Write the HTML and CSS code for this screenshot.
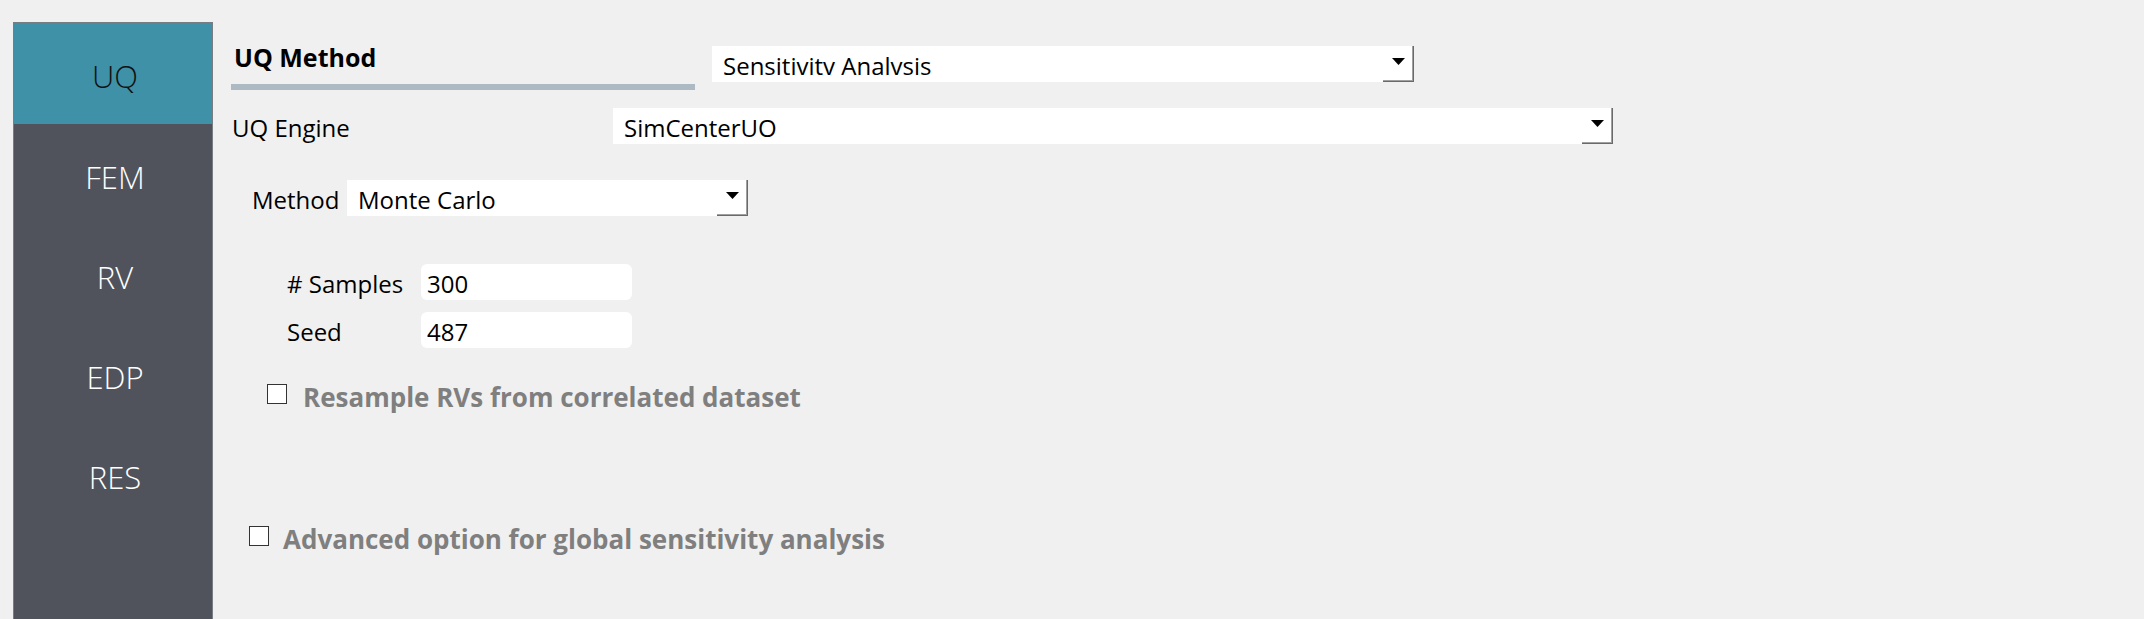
FILE: index.html
```html
<!DOCTYPE html>
<html lang="en">
<head>
<meta charset="utf-8">
<title>UQ</title>
<link rel="stylesheet" href="styles.css">
</head>
<body>
<div class="app">
  <nav class="sidebar">
    <div class="tab tab-active">UQ</div>
    <div class="tab">FEM</div>
    <div class="tab">RV</div>
    <div class="tab">EDP</div>
    <div class="tab">RES</div>
  </nav>
  <main class="main">
    <div class="header-row">
      <div class="header">
        <div class="header-title">UQ Method</div>
        <div class="header-bar"></div>
      </div>
      <div class="combo combo-method-type">
        <span class="combo-text">Sensitivitv Analvsis</span>
        <span class="combo-btn"><svg width="13" height="7" viewBox="0 0 13 7"><polygon points="0,0 13,0 6.5,7" fill="#000"/></svg></span>
      </div>
    </div>
    <div class="row row-engine">
      <span class="label label-engine">UQ Engine</span>
      <div class="combo combo-engine">
        <span class="combo-text">SimCenterUO</span>
        <span class="combo-btn"><svg width="13" height="7" viewBox="0 0 13 7"><polygon points="0,0 13,0 6.5,7" fill="#000"/></svg></span>
      </div>
    </div>
    <div class="row row-method">
      <span class="label label-method">Method</span>
      <div class="combo combo-mc">
        <span class="combo-text">Monte Carlo</span>
        <span class="combo-btn"><svg width="13" height="7" viewBox="0 0 13 7"><polygon points="0,0 13,0 6.5,7" fill="#000"/></svg></span>
      </div>
    </div>
    <div class="fields">
      <div class="row field-row">
        <span class="label label-field"># Samples</span>
        <div class="input">300</div>
      </div>
      <div class="row field-row">
        <span class="label label-field">Seed</span>
        <div class="input">487</div>
      </div>
    </div>
    <div class="check check-resample">
      <span class="box"></span>
      <span class="check-label">Resample RVs from correlated dataset</span>
    </div>
    <div class="check check-advanced">
      <span class="box"></span>
      <span class="check-label">Advanced option for global sensitivity analysis</span>
    </div>
  </main>
</div>
</body>
</html>
```

FILE: styles.css
```css
html, body {
  margin: 0;
  padding: 0;
}
body {
  width: 2144px;
  height: 619px;
  overflow: hidden;
  background: #f0f0f0;
  font-family: "Open Sans", "Noto Sans", sans-serif;
  color: #000;
}
.app {
  display: flex;
  align-items: flex-start;
  height: 619px;
  padding-left: 13px;
  box-sizing: border-box;
}
.sidebar {
  margin-top: 22px;
  width: 200px;
  height: 597px;
  box-sizing: border-box;
  border: 1px solid #787c83;
  border-bottom: none;
  background: #50535b;
  display: flex;
  flex-direction: column;
}
.tab {
  height: 100px;
  display: flex;
  align-items: center;
  justify-content: center;
  color: #ffffff;
  font-size: 31px;
  font-weight: 300;
  padding-top: 5px;
  padding-left: 4px;
  box-sizing: border-box;
}
.tab-active {
  height: 101px;
  background: #3e91a7;
  color: #111;
}
.main {
  display: flex;
  flex-direction: column;
  padding-left: 18px;
  font-size: 24px;
}
.header-row {
  display: flex;
  align-items: flex-start;
}
.header {
  width: 464px;
  padding-top: 40px;
}
.header-title {
  font-weight: 700;
  font-size: 25px;
  line-height: 34px;
  padding-left: 3px;
}
.header-bar {
  margin-top: 10px;
  height: 6px;
  background: #adbac3;
}
.combo {
  display: flex;
  height: 36px;
  background: #fff;
  box-sizing: border-box;
}
.combo-text {
  flex: 1;
  padding-left: 11px;
  padding-top: 3px;
  line-height: 33px;
  white-space: nowrap;
}
.combo-btn {
  width: 31px;
  display: flex;
  align-items: center;
  justify-content: center;
  box-sizing: border-box;
  border-right: 1px solid #6a6a6a;
  border-bottom: 1px solid #6a6a6a;
  box-shadow: inset -1px -1px 0 #a0a0a0;
  padding-bottom: 4px;
}
.combo-method-type {
  margin-top: 46px;
  margin-left: 17px;
  width: 702px;
}
.row {
  display: flex;
  align-items: center;
  height: 36px;
}
.label {
  white-space: nowrap;
  padding-top: 3px;
  line-height: 33px;
}
.row-engine {
  margin-top: 18px;
  padding-left: 1px;
}
.label-engine {
  width: 381px;
}
.combo-engine {
  width: 1000px;
}
.row-method {
  margin-top: 36px;
  padding-left: 21px;
}
.label-method {
  width: 95px;
}
.combo-mc {
  width: 401px;
}
.fields {
  margin-top: 48px;
  display: flex;
  flex-direction: column;
  gap: 12px;
  padding-left: 56px;
}
.label-field {
  width: 134px;
}
.input {
  width: 211px;
  height: 36px;
  line-height: 33px;
  padding-top: 3px;
  background: #fff;
  border-radius: 6px;
  padding-left: 6px;
  box-sizing: border-box;
}
.check {
  display: flex;
  align-items: center;
  height: 20px;
}
.box {
  width: 20px;
  height: 20px;
  box-sizing: border-box;
  border: 1px solid #333;
  background: #fff;
  flex: none;
}
.check-label {
  font-weight: 700;
  color: #7f7f7f;
  font-size: 26px;
  white-space: nowrap;
  padding-top: 5px;
}
.check-resample {
  margin-top: 36px;
  padding-left: 36px;
  gap: 16px;
}
.check-advanced {
  margin-top: 122px;
  padding-left: 18px;
  gap: 14px;
}
```
